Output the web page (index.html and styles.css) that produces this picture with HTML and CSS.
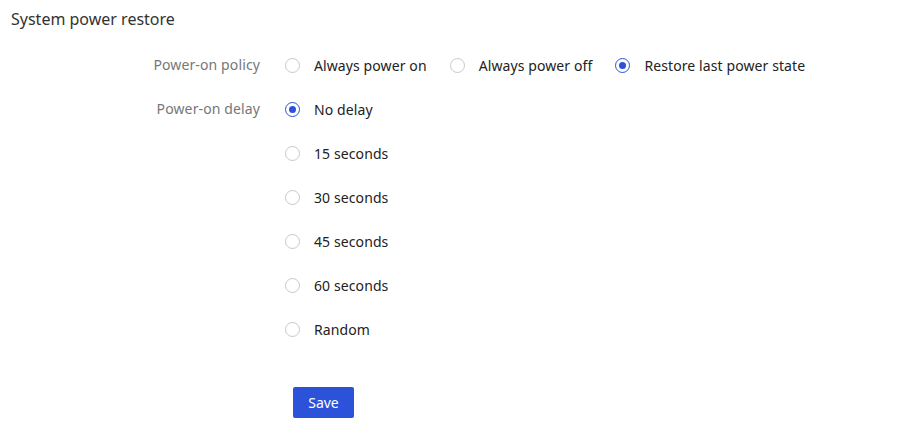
FILE: index.html
```html
<!DOCTYPE html>
<html>
<head>
<meta charset="utf-8">
<link rel="stylesheet" href="styles.css">
</head>
<body>
<div class="page">
  <h1 class="title">System power restore</h1>
  <div class="form">
    <div class="label">Power-on policy</div>
    <div class="options inline">
      <label class="opt"><span class="radio"></span><span>Always power on</span></label>
      <label class="opt"><span class="radio"></span><span>Always power off</span></label>
      <label class="opt"><span class="radio checked"></span><span>Restore last power state</span></label>
    </div>
    <div class="label">Power-on delay</div>
    <div class="options stack">
      <label class="opt"><span class="radio checked"></span><span>No delay</span></label>
      <label class="opt"><span class="radio"></span><span>15 seconds</span></label>
      <label class="opt"><span class="radio"></span><span>30 seconds</span></label>
      <label class="opt"><span class="radio"></span><span>45 seconds</span></label>
      <label class="opt"><span class="radio"></span><span>60 seconds</span></label>
      <label class="opt"><span class="radio"></span><span>Random</span></label>
    </div>
    <div></div>
    <div class="actions"><button class="save">Save</button></div>
  </div>
</div>
</body>
</html>
```
FILE: styles.css
```css
* { box-sizing: border-box; }
html, body { margin: 0; background: #fff; }
body { font-family: "Noto Sans", "Open Sans", Arial, sans-serif; color: #222; }
.page { width: 897px; height: 437px; }
.title {
  margin: 0;
  padding: 8px 0 0 11px;
  height: 43px;
  font-size: 16px;
  font-weight: 400;
  line-height: 22px;
  color: #333;
}
.form {
  display: grid;
  grid-template-columns: 260px 1fr;
  column-gap: 25px;
}
.label {
  height: 44px;
  line-height: 44px;
  text-align: right;
  font-size: 14px;
  letter-spacing: 0.12px;
  color: #777;
}
.options.inline { display: flex; gap: 23px; }
.options.stack { display: flex; flex-direction: column; }
.opt {
  display: flex;
  align-items: center;
  gap: 14px;
  height: 44px;
  font-size: 14px;
  letter-spacing: 0.1px;
  color: #222;
}
.radio {
  width: 15px;
  height: 15px;
  border: 1px solid #c8c8c8;
  border-radius: 50%;
  display: inline-flex;
  align-items: center;
  justify-content: center;
  flex: none;
  margin-top: 1px;
}
.radio.checked { border-color: #2c52d9; }
.radio.checked::after {
  content: "";
  width: 7px;
  height: 7px;
  border-radius: 50%;
  background: #2c52d9;
}
.actions { padding: 36px 0 0 8px; }
.save {
  width: 61px;
  height: 31px;
  border: none;
  border-radius: 2px;
  background: #2c52d9;
  color: #fff;
  font-family: inherit;
  font-size: 14px;
  padding: 0;
}
```
